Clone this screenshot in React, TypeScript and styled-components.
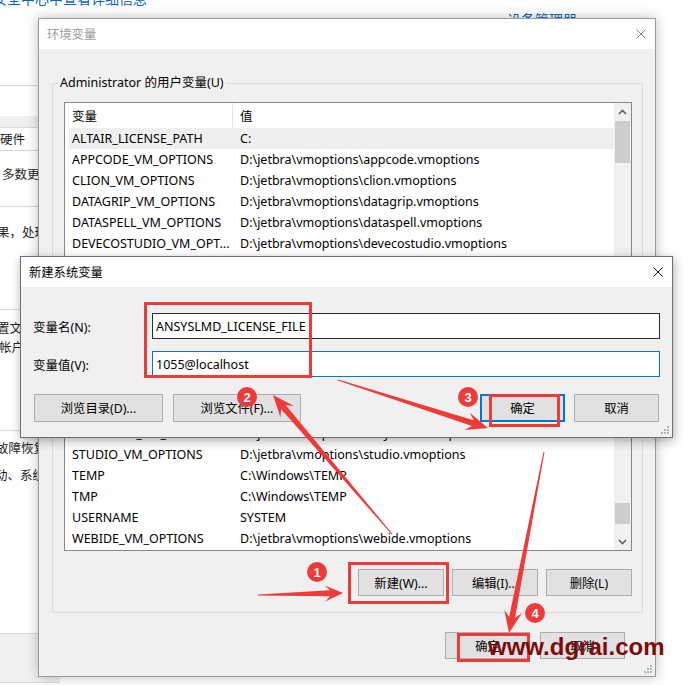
import React from "react";
import styled, { createGlobalStyle } from "styled-components";

const GlobalStyle = createGlobalStyle`
  html, body { margin: 0; padding: 0; background: #fff; }
  body { font-family: "Noto Sans", "Noto Sans CJK SC", sans-serif; font-size: 12px; color: #000; }
  * { box-sizing: border-box; }
`;

const RED = "#ef3a3a";

/* ---------- page & background ---------- */
const Page = styled.div`
  position: relative;
  width: 689px;
  height: 685px;
  overflow: hidden;
  background: #fff;
`;

const Desktop = styled.div`
  display: flex;
  flex-direction: column;
  height: 100%;
`;

const TopStrip = styled.div`
  height: 18px;
  display: flex;
  flex: none;
`;

const Link = styled.div<{ $mt: number; $ml: number }>`
  font-family: "Noto Sans CJK SC", sans-serif;
  font-size: 14px;
  line-height: 16px;
  color: #0a66c2;
  white-space: nowrap;
  margin-top: ${(p) => p.$mt}px;
  margin-left: ${(p) => p.$ml}px;
`;

const BgWindow = styled.div`
  width: 60px;
  display: flex;
  flex-direction: column;
  flex: none;
`;

const BgSection = styled.div<{ $h: number; $pt?: number; $gray?: boolean; $rule?: boolean }>`
  flex: none;
  height: ${(p) => p.$h}px;
  padding-top: ${(p) => p.$pt ?? 0}px;
  background: ${(p) => (p.$gray ? "#f0f0f0" : "#fff")};
  border-bottom: ${(p) => (p.$rule ? "1px solid #d9d9d9" : "none")};
  overflow: hidden;
`;

const BgText = styled.div<{ $gap?: number; $indent?: number }>`
  font-family: "Noto Sans CJK SC", sans-serif;
  font-size: 12.5px;
  line-height: 16px;
  color: #1e1e1e;
  white-space: nowrap;
  margin-top: ${(p) => p.$gap ?? 0}px;
  margin-left: ${(p) => p.$indent ?? 0}px;
`;

/* ---------- windows ---------- */
const Win = styled.div<{ $x: number; $y: number; $w: number; $h: number; $active?: boolean }>`
  position: absolute;
  left: ${(p) => p.$x}px;
  top: ${(p) => p.$y}px;
  width: ${(p) => p.$w}px;
  height: ${(p) => p.$h}px;
  display: flex;
  flex-direction: column;
  background: #f0f0f0;
  border: 1px solid ${(p) => (p.$active ? "#6f6f6f" : "#9a9a9a")};
  box-shadow: ${(p) => (p.$active ? "1px 3px 10px rgba(0,0,0,0.32)" : "0 0 12px rgba(0,0,0,0.26)")};
`;

const TitleBar = styled.div`
  height: 30px;
  flex: none;
  background: #fff;
  display: flex;
  align-items: center;
  padding: 0 9px 0 8px;
`;

const TitleText = styled.div<{ $active?: boolean }>`
  font-size: 12.3px;
  color: ${(p) => (p.$active ? "#000" : "#9b9b9b")};
`;

const CloseBox = styled.div`
  margin-left: auto;
  width: 10px;
  height: 10px;
  display: flex;
`;

const Grip = styled.div`
  position: absolute;
  right: 2px;
  bottom: 2px;
  width: 10px;
  height: 10px;
  display: flex;
`;

const Btn = styled.div<{ $w: number; $h: number; $primary?: boolean }>`
  flex: none;
  width: ${(p) => p.$w}px;
  height: ${(p) => p.$h}px;
  display: flex;
  align-items: center;
  justify-content: center;
  background: #e1e1e1;
  border: ${(p) => (p.$primary ? "2px solid #0078d7" : "1px solid #adadad")};
  font-size: 12.3px;
  color: #000;
  white-space: nowrap;
`;

/* ---------- env dialog ---------- */
const EnvBody = styled.div`
  flex: 1;
  display: flex;
  flex-direction: column;
  padding: 34px 12px 0 13px;
`;

const GroupBox = styled.div`
  border: 1px solid #dcdcdc;
  padding: 0 10px 16px 11px;
  display: flex;
  flex-direction: column;
`;

const GroupLabel = styled.div`
  margin: -9px 0 0 -6px;
  padding: 0 2px;
  width: fit-content;
  line-height: 16px;
  background: #f0f0f0;
  font-size: 12.5px;
  color: #000;
`;

const ListView = styled.div`
  margin-top: 11px;
  height: 449px;
  border: 1px solid #828790;
  background: #fff;
  display: grid;
  grid-template-columns: 1fr 17px;
  overflow: hidden;
`;

const ListMain = styled.div`
  display: flex;
  flex-direction: column;
  overflow: hidden;
  min-width: 0;
`;

const HeaderRow = styled.div`
  height: 25px;
  flex: none;
  display: grid;
  grid-template-columns: 168px 1fr;
`;

const HeaderCell = styled.div<{ $divider?: boolean }>`
  display: flex;
  align-items: center;
  padding-left: 7px;
  font-size: 12.5px;
  border-right: ${(p) => (p.$divider ? "1px solid #e5e5e5" : "none")};
`;

const Row = styled.div<{ $selected?: boolean; $shift?: number }>`
  flex: none;
  height: 21px;
  margin-left: 4px;
  margin-top: ${(p) => p.$shift ?? 0}px;
  display: grid;
  grid-template-columns: 164px 1fr;
  align-items: center;
  background: ${(p) => (p.$selected ? "#efefef" : "transparent")};
`;

const Cell = styled.div<{ $pl: number }>`
  padding-left: ${(p) => p.$pl}px;
  font-size: 12.5px;
  color: #000;
  white-space: nowrap;
  overflow: hidden;
`;

const ScrollBar = styled.div`
  background: #f0f0f0;
  display: flex;
  flex-direction: column;
  align-items: center;
`;

const ScrollBtn = styled.div<{ $mt?: number }>`
  height: 17px;
  width: 17px;
  flex: none;
  margin-top: ${(p) => p.$mt ?? 0}px;
  display: flex;
  align-items: center;
  justify-content: center;
`;

const Thumb = styled.div<{ $h: number; $mt: number }>`
  width: 15px;
  height: ${(p) => p.$h}px;
  margin-top: ${(p) => p.$mt}px;
  background: #cdcdcd;
  flex: none;
`;

const BtnRow = styled.div<{ $mt: number; $gap: number; $pr?: number }>`
  display: flex;
  justify-content: flex-end;
  gap: ${(p) => p.$gap}px;
  margin-top: ${(p) => p.$mt}px;
  padding-right: ${(p) => p.$pr ?? 0}px;
`;

/* ---------- new var dialog ---------- */
const NewBody = styled.div`
  flex: 1;
  display: flex;
  flex-direction: column;
  padding: 26px 12px 0 12px;
`;

const FormGrid = styled.div`
  display: grid;
  grid-template-columns: 119px 1fr;
  row-gap: 12px;
  align-items: center;
`;

const FieldLabel = styled.div`
  font-size: 12.5px;
  color: #000;
`;

const TextBox = styled.div<{ $focused?: boolean }>`
  height: 26px;
  background: #fff;
  border: 1px solid ${(p) => (p.$focused ? "#0078d7" : "#2b2b2b")};
  display: flex;
  align-items: center;
  padding-left: 3px;
  font-size: 12.5px;
  color: #000;
`;

const NewBtnRow = styled.div`
  display: flex;
  margin: 17px 1px 0 1px;
`;

const BtnGroup = styled.div<{ $gap: number; $push?: boolean }>`
  display: flex;
  gap: ${(p) => p.$gap}px;
  margin-left: ${(p) => (p.$push ? "auto" : "0")};
`;

/* ---------- annotations ---------- */
const Overlay = styled.div`
  position: absolute;
  inset: 0;
  pointer-events: none;
`;

const ArrowCanvas = styled.svg`
  position: absolute;
  left: 0;
  top: 0;
`;

const MarkBox = styled.div<{ $x: number; $y: number; $w: number; $h: number }>`
  position: absolute;
  left: ${(p) => p.$x}px;
  top: ${(p) => p.$y}px;
  width: ${(p) => p.$w}px;
  height: ${(p) => p.$h}px;
  border: 3px solid ${RED};
`;

const Badge = styled.div<{ $cx: number; $cy: number }>`
  position: absolute;
  left: ${(p) => p.$cx - 10}px;
  top: ${(p) => p.$cy - 10}px;
  width: 20px;
  height: 20px;
  border-radius: 50%;
  background: ${RED};
  color: #fff;
  font-family: "Liberation Sans", Arial, sans-serif;
  font-weight: bold;
  font-size: 13px;
  display: flex;
  align-items: center;
  justify-content: center;
`;

const Watermark = styled.div`
  position: absolute;
  left: 488px;
  top: 635px;
  font-family: "Liberation Sans", Arial, sans-serif;
  font-weight: bold;
  font-size: 24px;
  line-height: 24px;
  color: #7e0b0b;
  white-space: nowrap;
`;

/* ---------- icons ---------- */
const CloseIcon = ({ color }: { color: string }) => (
  <svg width="10" height="10" viewBox="0 0 10 10">
    <path d="M0.5 0.5 L9.5 9.5 M9.5 0.5 L0.5 9.5" stroke={color} strokeWidth="1" fill="none" />
  </svg>
);

const GripIcon = () => (
  <svg width="10" height="10" viewBox="0 0 10 10">
    {[
      [8, 2],
      [5, 5],
      [8, 5],
      [2, 8],
      [5, 8],
      [8, 8],
    ].map(([x, y], i) => (
      <rect key={i} x={x - 1} y={y - 1} width="2" height="2" fill="#b4b4b4" />
    ))}
  </svg>
);

const Chevron = ({ up }: { up?: boolean }) => (
  <svg width="9" height="6" viewBox="0 0 9 6">
    <path
      d={up ? "M1 5 L4.5 1.5 L8 5" : "M1 1 L4.5 4.5 L8 1"}
      stroke="#606060"
      strokeWidth="1.6"
      fill="none"
    />
  </svg>
);

function arrowPoints(
  x1: number,
  y1: number,
  x2: number,
  y2: number,
  headLen = 22,
  headW = 18,
  neckW = 6
) {
  const dx = x2 - x1;
  const dy = y2 - y1;
  const L = Math.hypot(dx, dy);
  const ux = dx / L;
  const uy = dy / L;
  const nx = -uy;
  const ny = ux;
  const nkx = x2 - ux * headLen * 0.72;
  const nky = y2 - uy * headLen * 0.72;
  const bx = x2 - ux * headLen;
  const by = y2 - uy * headLen;
  const pts = [
    [x1 + nx * 0.5, y1 + ny * 0.5],
    [nkx + (nx * neckW) / 2, nky + (ny * neckW) / 2],
    [bx + (nx * headW) / 2, by + (ny * headW) / 2],
    [x2, y2],
    [bx - (nx * headW) / 2, by - (ny * headW) / 2],
    [nkx - (nx * neckW) / 2, nky - (ny * neckW) / 2],
    [x1 - nx * 0.5, y1 - ny * 0.5],
  ];
  return pts.map((p) => p.map((v) => v.toFixed(1)).join(",")).join(" ");
}

/* ---------- data ---------- */
const V = (n: string) => `D:\\jetbra\\vmoptions\\${n}.vmoptions`;
const rows: [string, string][] = [
  ["ALTAIR_LICENSE_PATH", "C:"],
  ["APPCODE_VM_OPTIONS", V("appcode")],
  ["CLION_VM_OPTIONS", V("clion")],
  ["DATAGRIP_VM_OPTIONS", V("datagrip")],
  ["DATASPELL_VM_OPTIONS", V("dataspell")],
  ["DEVECOSTUDIO_VM_OPT...", V("devecostudio")],
  ["GATEWAY_VM_OPTIONS", V("gateway")],
  ["GOLAND_VM_OPTIONS", V("goland")],
  ["IDEA_VM_OPTIONS", V("idea")],
  ["JETBRAINSCLIENT_VM_...", V("jetbrainsclient")],
  ["JETBRAINS_CLIENT_VM...", V("jetbrains_client")],
  ["PHPSTORM_VM_OPTIONS", V("phpstorm")],
  ["PYCHARM_VM_OPTIONS", V("pycharm")],
  ["RIDER_VM_OPTIONS", V("rider")],
  ["RUBYMINE_VM_OPTIONS", V("rubymine")],
  ["STUDIO_VM_OPTIONS", V("studio")],
  ["TEMP", "C:\\Windows\\TEMP"],
  ["TMP", "C:\\Windows\\TEMP"],
  ["USERNAME", "SYSTEM"],
  ["WEBIDE_VM_OPTIONS", V("webide")],
];

const arrows: [number, number, number, number, number, number][] = [
  [258, 595, 343, 593, 18, 16],
  [392, 534, 273, 395, 22, 18],
  [338, 380, 488, 428, 22, 18],
  [544, 452, 509, 633, 22, 18],
];

export default function App() {
  return (
    <>
      <GlobalStyle />
      <Page>
        <Desktop>
          <TopStrip>
            <Link $mt={-10} $ml={-7}>安全中心中查看详细信息</Link>
            <Link $mt={11} $ml={360}>设备管理器</Link>
          </TopStrip>
          <BgWindow>
            <BgSection $h={68} $rule />
            <BgSection $h={30} />
            <BgSection $h={12} $gray $rule />
            <BgSection $h={23} $pt={3} $rule>
              <BgText>硬件</BgText>
            </BgSection>
            <BgSection $h={56} $pt={15} $rule>
              <BgText $indent={2}>多数更改</BgText>
            </BgSection>
            <BgSection $h={103} $pt={17} $rule>
              <BgText $indent={-3}>果，处理</BgText>
            </BgSection>
            <BgSection $h={121} $pt={10} $rule>
              <BgText $indent={-3}>置文件</BgText>
              <BgText $gap={3} $indent={-1}>帐户</BgText>
            </BgSection>
            <BgSection $h={203} $pt={9} $rule>
              <BgText $indent={-4}>故障恢复</BgText>
              <BgText $gap={11} $indent={-5}>动、系统</BgText>
            </BgSection>
            <BgSection $h={49} $gray $rule />
          </BgWindow>
        </Desktop>

        <Win $x={38} $y={18} $w={618} $h={659}>
          <TitleBar>
            <TitleText>环境变量</TitleText>
            <CloseBox>
              <CloseIcon color="#8a8a8a" />
            </CloseBox>
          </TitleBar>
          <EnvBody>
            <GroupBox>
              <GroupLabel>Administrator 的用户变量(U)</GroupLabel>
              <ListView>
                <ListMain>
                  <HeaderRow>
                    <HeaderCell $divider>变量</HeaderCell>
                    <HeaderCell>值</HeaderCell>
                  </HeaderRow>
                  {rows.map(([n, v], i) => (
                    <Row key={n} $selected={i === 0} $shift={i === 14 ? 1 : 0}>
                      <Cell $pl={3}>{n}</Cell>
                      <Cell $pl={7}>{v}</Cell>
                    </Row>
                  ))}
                </ListMain>
                <ScrollBar>
                  <ScrollBtn>
                    <Chevron up />
                  </ScrollBtn>
                  <Thumb $h={42} $mt={1} />
                  <Thumb $h={21} $mt={340} />
                  <ScrollBtn $mt={9}>
                    <Chevron />
                  </ScrollBtn>
                </ScrollBar>
              </ListView>
              <BtnRow $mt={18} $gap={8}>
                <Btn $w={86} $h={27}>新建(W)...</Btn>
                <Btn $w={86} $h={27}>编辑(I)...</Btn>
                <Btn $w={86} $h={27}>删除(L)</Btn>
              </BtnRow>
            </GroupBox>
            <BtnRow $mt={19} $gap={10} $pr={18}>
              <Btn $w={85} $h={27}>确定</Btn>
              <Btn $w={85} $h={27}>取消</Btn>
            </BtnRow>
          </EnvBody>
          <Grip>
            <GripIcon />
          </Grip>
        </Win>

        <Win $x={20} $y={256} $w={653} $h={182} $active>
          <TitleBar>
            <TitleText $active>新建系统变量</TitleText>
            <CloseBox>
              <CloseIcon color="#111" />
            </CloseBox>
          </TitleBar>
          <NewBody>
            <FormGrid>
              <FieldLabel>变量名(N):</FieldLabel>
              <TextBox>ANSYSLMD_LICENSE_FILE</TextBox>
              <FieldLabel>变量值(V):</FieldLabel>
              <TextBox $focused>1055@localhost</TextBox>
            </FormGrid>
            <NewBtnRow>
              <BtnGroup $gap={10}>
                <Btn $w={129} $h={28}>浏览目录(D)...</Btn>
                <Btn $w={128} $h={28}>浏览文件(F)...</Btn>
              </BtnGroup>
              <BtnGroup $gap={9} $push>
                <Btn $w={85} $h={28} $primary>确定</Btn>
                <Btn $w={85} $h={28}>取消</Btn>
              </BtnGroup>
            </NewBtnRow>
          </NewBody>
          <Grip>
            <GripIcon />
          </Grip>
        </Win>

        <Overlay>
          <ArrowCanvas width="689" height="685" viewBox="0 0 689 685">
            {arrows.map(([a, b, c, d, hl, hw], i) => (
              <polygon key={i} points={arrowPoints(a, b, c, d, hl, hw)} fill={RED} />
            ))}
          </ArrowCanvas>
          <MarkBox $x={144} $y={302} $w={168} $h={76} />
          <MarkBox $x={489} $y={394} $w={71} $h={33} />
          <MarkBox $x={348} $y={562} $w={101} $h={42} />
          <MarkBox $x={457} $y={633} $w={73} $h={29} />
          <Badge $cx={247} $cy={397}>2</Badge>
          <Badge $cx={468} $cy={397}>3</Badge>
          <Badge $cx={317} $cy={572}>1</Badge>
          <Badge $cx={535} $cy={613}>4</Badge>
          <Watermark>www.dgrai.com</Watermark>
        </Overlay>
      </Page>
    </>
  );
}
